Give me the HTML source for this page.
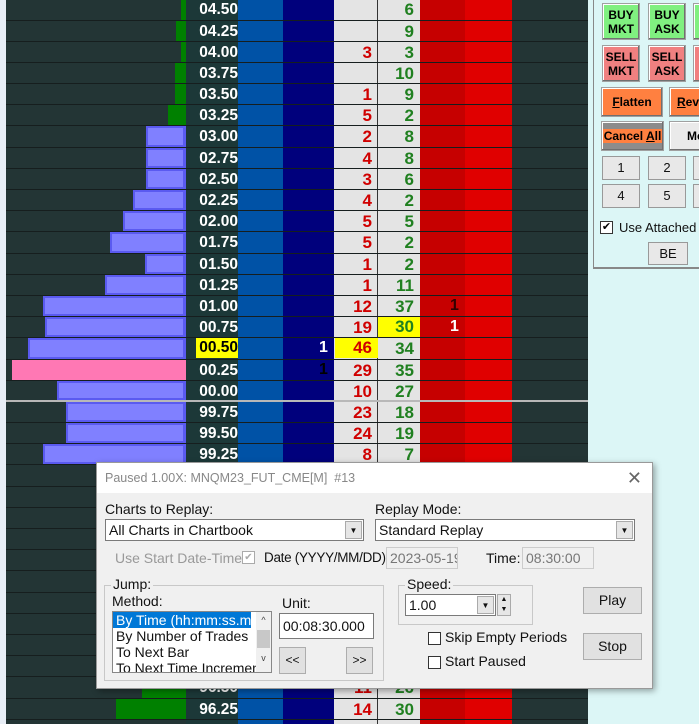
<!DOCTYPE html><html><head><style>
*{margin:0;padding:0;box-sizing:border-box}
body{width:699px;height:724px;overflow:hidden;position:relative;background:#233535;font-family:"Liberation Sans",sans-serif}
.c{position:absolute;top:0;height:724px}
#rows{position:absolute;left:6px;top:-0.7px;width:582px}
.r{position:relative;height:21.2px;border-bottom:1px solid #161e1e}
.b{position:absolute;top:0;bottom:0;right:402px;background:#8080ff;border:2px solid #5a5af0;border-right-width:3px}
.g{position:absolute;top:0;bottom:0;right:402px;background:#008000}
.pk{background:#ff78b4;border:none}
.p{position:absolute;left:180px;width:52px;text-align:right;top:1px;color:#fff;font-weight:bold;font-size:15.5px;line-height:19px}
.bd{position:absolute;left:328px;width:38px;text-align:right;top:1px;color:#d00000;font-weight:bold;font-size:17px;line-height:19px}
.ak{position:absolute;left:372px;width:36px;text-align:right;top:1px;color:#208020;font-weight:bold;font-size:17px;line-height:19px}
.y{background:#ffff00}
.pan{position:absolute;left:588px;top:0;width:111px;height:724px;background:#dcf6f6}
.btn{position:absolute;font-size:12px;font-weight:bold;text-align:center;border:1px solid #a0a0a0;box-shadow:inset -1px -1px #707070,inset 1px 1px #fff;line-height:14px}
.nb{position:absolute;width:38px;height:24px;background:#e8e8e8;border:1px solid #999;font-size:13px;text-align:center;line-height:22px;color:#111}
.dlg{position:absolute;left:96px;top:462px;width:557px;height:227px;background:#f0f0f0;border:1px solid #999;box-shadow:2px 2px 6px rgba(0,0,0,.35);font-size:14px;color:#111}
.a{position:absolute;white-space:nowrap}
.sel{position:absolute;background:#fff;border:1px solid #7a7a7a;height:22px;line-height:20px;padding-left:3px;white-space:nowrap;overflow:hidden}
.dd{position:absolute;right:1px;top:1px;width:17px;height:18px;background:#e6e6e6;border:1px solid #aaa;font-size:8px;text-align:center;line-height:17px}
.gb{position:absolute;border:1px solid #c8c8c8}
.pb{position:absolute;background:#e1e1e1;border:1px solid #adadad;text-align:center}
.cb{position:absolute;width:13px;height:13px;border:1px solid #333;background:#fff}
</style></head><body>
<div class="c" style="left:0;width:6px;background:#e8eef6"></div>
<div class="c" style="left:186px;width:52px;background:#1c3838"></div>
<div class="c" style="left:238px;width:45px;background:#0052a6"></div>
<div class="c" style="left:283px;width:51px;background:#00007c"></div>
<div class="c" style="left:334px;width:86px;background:#e4e4e4"></div>
<div class="c" style="left:377px;width:1px;background:#333"></div>
<div class="c" style="left:420px;width:45px;background:#c60000"></div>
<div class="c" style="left:465px;width:47px;background:#e00000"></div>
<div id="rows">
<div class="r"><div class="g" style="left:175px"></div><div class="p">04.50</div><div class="ak">6</div></div>
<div class="r"><div class="g" style="left:170px"></div><div class="p">04.25</div><div class="ak">9</div></div>
<div class="r"><div class="g" style="left:175px"></div><div class="p">04.00</div><div class="bd">3</div><div class="ak">3</div></div>
<div class="r"><div class="g" style="left:169px"></div><div class="p">03.75</div><div class="ak">10</div></div>
<div class="r"><div class="g" style="left:169px"></div><div class="p">03.50</div><div class="bd">1</div><div class="ak">9</div></div>
<div class="r"><div class="g" style="left:162px"></div><div class="p">03.25</div><div class="bd">5</div><div class="ak">2</div></div>
<div class="r"><div class="b" style="left:140px"></div><div class="p">03.00</div><div class="bd">2</div><div class="ak">8</div></div>
<div class="r"><div class="b" style="left:140px"></div><div class="p">02.75</div><div class="bd">4</div><div class="ak">8</div></div>
<div class="r"><div class="b" style="left:140px"></div><div class="p">02.50</div><div class="bd">3</div><div class="ak">6</div></div>
<div class="r"><div class="b" style="left:127px"></div><div class="p">02.25</div><div class="bd">4</div><div class="ak">2</div></div>
<div class="r"><div class="b" style="left:117px"></div><div class="p">02.00</div><div class="bd">5</div><div class="ak">5</div></div>
<div class="r"><div class="b" style="left:104px"></div><div class="p">01.75</div><div class="bd">5</div><div class="ak">2</div></div>
<div class="r"><div class="b" style="left:139px"></div><div class="p">01.50</div><div class="bd">1</div><div class="ak">2</div></div>
<div class="r"><div class="b" style="left:99px"></div><div class="p">01.25</div><div class="bd">1</div><div class="ak">11</div></div>
<div class="r"><div class="b" style="left:37px"></div><div class="p">01.00</div><div class="bd">12</div><div class="ak">37</div><div class="a" style="left:444px;top:1px;font-weight:bold;font-size:16px;color:#300">1</div></div>
<div class="r"><div class="b" style="left:39px"></div><div class="p">00.75</div><div class="bd">19</div><div class="ak y" style="left:372px;width:42px;padding-right:6px;top:0;height:20px">30</div><div class="a" style="left:444px;top:1px;font-weight:bold;font-size:16px;color:#fff">1</div></div>
<div class="r"><div class="b" style="left:22px"></div><div class="p y" style="left:190px;width:42px;color:#000;top:0;height:20px">00.50</div><div class="a" style="left:313px;top:1px;font-weight:bold;font-size:16px;color:#fff">1</div><div class="bd y" style="left:329px;width:43px;padding-right:6px;top:0;height:20px">46</div><div class="ak">34</div></div>
<div class="r"><div class="b pk" style="left:6px"></div><div class="p">00.25</div><div class="a" style="left:313px;top:1px;font-weight:bold;font-size:16px;color:#000">1</div><div class="bd">29</div><div class="ak">35</div></div>
<div class="r" style="border-bottom:2px solid #b8b8b8"><div class="b" style="left:51px"></div><div class="p">00.00</div><div class="bd">10</div><div class="ak">27</div></div>
<div class="r"><div class="b" style="left:60px"></div><div class="p">99.75</div><div class="bd">23</div><div class="ak">18</div></div>
<div class="r"><div class="b" style="left:60px"></div><div class="p">99.50</div><div class="bd">24</div><div class="ak">19</div></div>
<div class="r"><div class="b" style="left:37px"></div><div class="p">99.25</div><div class="bd">8</div><div class="ak">7</div></div>
<div class="r"></div><div class="r"></div><div class="r"></div><div class="r"></div><div class="r"></div><div class="r"></div><div class="r"></div><div class="r"></div><div class="r"></div><div class="r"></div>
<div class="r"><div class="g" style="left:136px"></div><div class="p">96.50</div><div class="bd">11</div><div class="ak">26</div></div>
<div class="r"><div class="g" style="left:110px"></div><div class="p">96.25</div><div class="bd">14</div><div class="ak">30</div></div>
</div>
<div class="pan">
<div class="a" style="left:5px;top:0;width:106px;height:269px;border-bottom:2px solid #888;border-left:1px solid #888"></div>
<div class="btn" style="left:14px;top:3px;width:38px;height:37px;background:#80f080;padding-top:4px">BUY<br>MKT</div>
<div class="btn" style="left:60px;top:3px;width:38px;height:37px;background:#80f080;padding-top:4px">BUY<br>ASK</div>
<div class="btn" style="left:105px;top:3px;width:10px;height:37px;background:#80f080"></div>
<div class="btn" style="left:14px;top:45px;width:38px;height:37px;background:#f08080;padding-top:4px">SELL<br>MKT</div>
<div class="btn" style="left:60px;top:45px;width:38px;height:37px;background:#f08080;padding-top:4px">SELL<br>ASK</div>
<div class="btn" style="left:105px;top:45px;width:10px;height:37px;background:#f08080"></div>
<div class="btn" style="left:13px;top:87px;width:62px;height:30px;background:#ff8040;line-height:28px"><u>F</u>latten</div>
<div class="btn" style="left:81px;top:87px;width:40px;height:30px;background:#ff8040;line-height:28px;text-align:left;padding-left:7px"><u>R</u>eve</div>
<div class="btn" style="left:13px;top:121px;width:63px;height:30px;background:#8c8c8c;line-height:28px"><span style="background:#ff8040;padding:0 1px">Cancel <u>A</u>ll</span></div>
<div class="btn" style="left:81px;top:121px;width:40px;height:30px;background:#eaeaea;line-height:28px;text-align:left;padding-left:17px">Me</div>
<div class="nb" style="left:14px;top:156px">1</div><div class="nb" style="left:60px;top:156px">2</div><div class="nb" style="left:105px;top:156px"></div>
<div class="nb" style="left:14px;top:184px">4</div><div class="nb" style="left:60px;top:184px">5</div><div class="nb" style="left:105px;top:184px"></div>
<div class="cb" style="left:12px;top:221px;font-size:11px;line-height:11px;text-align:center">✔</div>
<div class="a" style="left:31px;top:220px;font-size:13px;color:#111">Use Attached O</div>
<div class="nb" style="left:60px;top:242px;width:40px;height:23px;line-height:21px">BE</div>
</div>
<div class="dlg">
<div class="a" style="left:0;top:0;width:555px;height:30px;background:#fff;color:#888;font-size:12.5px;line-height:30px;padding-left:8px">Paused 1.00X: MNQM23_FUT_CME[M]&nbsp; #13<span style="position:absolute;right:10px;top:0;font-size:18px;color:#666">✕</span></div>
<div class="a" style="left:8px;top:38px">Charts to Replay:</div>
<div class="sel" style="left:8px;top:56px;width:259px">All Charts in Chartbook<div class="dd">▼</div></div>
<div class="a" style="left:278px;top:38px">Replay Mode:</div>
<div class="sel" style="left:278px;top:56px;width:260px">Standard Replay<div class="dd">▼</div></div>
<div class="a" style="left:18px;top:87px;color:#999">Use Start Date-Time</div>
<div class="cb" style="left:145px;top:88px;border-color:#aaa;font-size:10px;color:#aaa;line-height:11px;text-align:center">✔</div>
<div class="a" style="left:167px;top:87px;font-size:13.5px;letter-spacing:-0.3px">Date (YYYY/MM/DD):</div>
<div class="sel" style="left:289px;top:84px;width:72px;background:#f0f0f0;color:#777;border-color:#ccc">2023-05-19</div>
<div class="a" style="left:389px;top:87px">Time:</div>
<div class="sel" style="left:425px;top:84px;width:72px;background:#f0f0f0;color:#777;border-color:#ccc">08:30:00</div>
<div class="gb" style="left:7px;top:122px;width:280px;height:96px"></div>
<div class="a" style="left:14px;top:113px;background:#f0f0f0;padding:0 2px">Jump:</div>
<div class="a" style="left:15px;top:130px">Method:</div>
<div class="a" style="left:15px;top:148px;width:160px;height:62px;background:#fff;border:1px solid #888;overflow:hidden;line-height:16px">
<div style="background:#0078d7;color:#fff;width:138px;padding-left:3px">By Time (hh:mm:ss.ms)</div>
<div style="padding-left:3px">By Number of Trades</div><div style="padding-left:3px">To Next Bar</div><div style="padding-left:3px">To Next Time Increment (h</div>
<div style="position:absolute;right:0;top:0;width:15px;height:62px;background:#f0f0f0;font-size:9px;text-align:center;color:#444">^<div style="background:#c8c8c8;height:18px;margin:2px 1px"></div>v</div></div>
<div class="a" style="left:185px;top:132px">Unit:</div>
<div class="sel" style="left:182px;top:150px;width:95px;height:26px;line-height:24px">00:08:30.000</div>
<div class="pb" style="left:182px;top:184px;width:27px;height:27px;line-height:25px;font-size:12px">&lt;&lt;</div>
<div class="pb" style="left:249px;top:184px;width:27px;height:27px;line-height:25px;font-size:12px">&gt;&gt;</div>
<div class="gb" style="left:301px;top:122px;width:135px;height:40px"></div>
<div class="a" style="left:308px;top:113px;background:#f0f0f0;padding:0 2px">Speed:</div>
<div class="sel" style="left:308px;top:131px;width:91px;height:22px">1.00<div class="dd">▼</div></div>
<div class="a" style="left:400px;top:131px;width:14px;height:22px;border:1px solid #aaa;background:#e6e6e6;font-size:7px;line-height:10px;text-align:center">▲<br>▼</div>
<div class="pb" style="left:486px;top:124px;width:59px;height:27px;line-height:25px">Play</div>
<div class="cb" style="left:331px;top:169px"></div><div class="a" style="left:348px;top:166px">Skip Empty Periods</div>
<div class="cb" style="left:331px;top:193px"></div><div class="a" style="left:348px;top:190px">Start Paused</div>
<div class="pb" style="left:486px;top:170px;width:59px;height:27px;line-height:25px">Stop</div>
</div>
</body></html>
